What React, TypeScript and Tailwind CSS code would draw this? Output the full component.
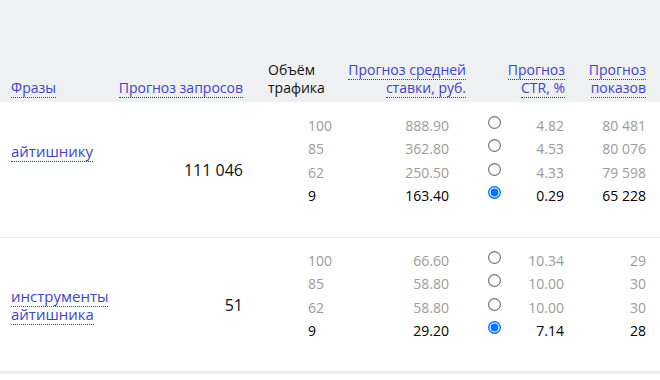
import React from "react";

type Sub = [string, string, string, string];

const g1: Sub[] = [
  ["100", "888.90", "4.82", "80 481"],
  ["85", "362.80", "4.53", "80 076"],
  ["62", "250.50", "4.33", "79 598"],
  ["9", "163.40", "0.29", "65 228"],
];
const g2: Sub[] = [
  ["100", "66.60", "10.34", "29"],
  ["85", "58.80", "10.00", "30"],
  ["62", "58.80", "10.00", "30"],
  ["9", "29.20", "7.14", "28"],
];

function Radio({ checked }: { checked: boolean }) {
  return (
    <svg width="13" height="13" viewBox="0 0 13 13" className="block">
      {checked ? (
        <>
          <circle cx="6.5" cy="6.5" r="6.5" fill="#0075ff" />
          <circle cx="6.5" cy="6.5" r="5.1" fill="#ffffff" />
          <circle cx="6.5" cy="6.5" r="3.9" fill="#0075ff" />
        </>
      ) : (
        <circle cx="6.5" cy="6.5" r="5.9" fill="#ffffff" stroke="#767676" strokeWidth="1.2" />
      )}
    </svg>
  );
}

function Link({ children }: { children: React.ReactNode }) {
  return (
    <span className="text-[#3c45c8] border-b border-dotted border-[#2a3bd8]">{children}</span>
  );
}

function Group({
  phrase,
  total,
  rows,
  phraseClass,
  rowClass,
  dataClass,
}: {
  phrase: React.ReactNode;
  total: string;
  rows: Sub[];
  phraseClass: string;
  rowClass: string;
  dataClass: string;
}) {
  return (
    <div className={`flex ${rowClass}`}>
      <div className="w-[110px] pl-[11px] flex items-center">
        <div className={`text-[15px] leading-[18px] ${phraseClass}`}>{phrase}</div>
      </div>
      <div className="w-[133px] flex items-center justify-end text-[16px] leading-[18px] text-[#111]">
        {total}
      </div>
      <div className={`flex flex-col pl-[65px] ${dataClass}`}>
        {rows.map((r, i) => {
          const sel = i === rows.length - 1;
          const c = sel ? "text-[#000]" : "text-[#9b9b9b]";
          return (
            <div key={i} className={`flex h-[23.3px] leading-[23.3px] text-[14px] ${c}`}>
              <div className="w-[60px]">{r[0]}</div>
              <div className="w-[81px] text-right">{r[1]}</div>
              <div className="w-[61px] pl-[39px] pt-[2px]">
                <Radio checked={sel} />
              </div>
              <div className="w-[54px] flex justify-end whitespace-nowrap">{r[2]}</div>
              <div className="w-[82px] flex justify-end whitespace-nowrap">{r[3]}</div>
            </div>
          );
        })}
      </div>
    </div>
  );
}

export default function App() {
  return (
    <div className="w-[660px] h-[380px] bg-white font-['Open_Sans',sans-serif] overflow-hidden">
      <div className="h-[102px] bg-[#eff0f2] flex items-end pb-[6px] text-[14px] leading-[17.5px] whitespace-nowrap">
        <div className="w-[110px] pl-[11px]">
          <Link>Фразы</Link>
        </div>
        <div className="w-[133px] text-right">
          <Link>Прогноз запросов</Link>
        </div>
        <div className="w-[97px] pl-[25px] text-[#111]">
          Объём
          <br />
          трафика
        </div>
        <div className="w-[126px] text-right">
          <Link>
            Прогноз средней
            <br />
            ставки, руб.
          </Link>
        </div>
        <div className="w-[99px] text-right">
          <Link>
            Прогноз
            <br />
            CTR, %
          </Link>
        </div>
        <div className="w-[81px] text-right">
          <Link>
            Прогноз
            <br />
            показов
          </Link>
        </div>
      </div>
      <Group
        phrase={<Link>айтишнику</Link>}
        total="111 046"
        rows={g1}
        phraseClass="mb-[37px]"
        rowClass="border-b border-[#ebebef]"
        dataClass="pt-[12px] pb-[30px]"
      />
      <Group
        phrase={
          <>
            <Link>инструменты</Link>
            <br />
            <Link>айтишника</Link>
          </>
        }
        total="51"
        rows={g2}
        phraseClass=""
        rowClass="border-b-[3px] border-[#efeef4]"
        dataClass="pt-[11px] pb-[29px]"
      />
    </div>
  );
}
